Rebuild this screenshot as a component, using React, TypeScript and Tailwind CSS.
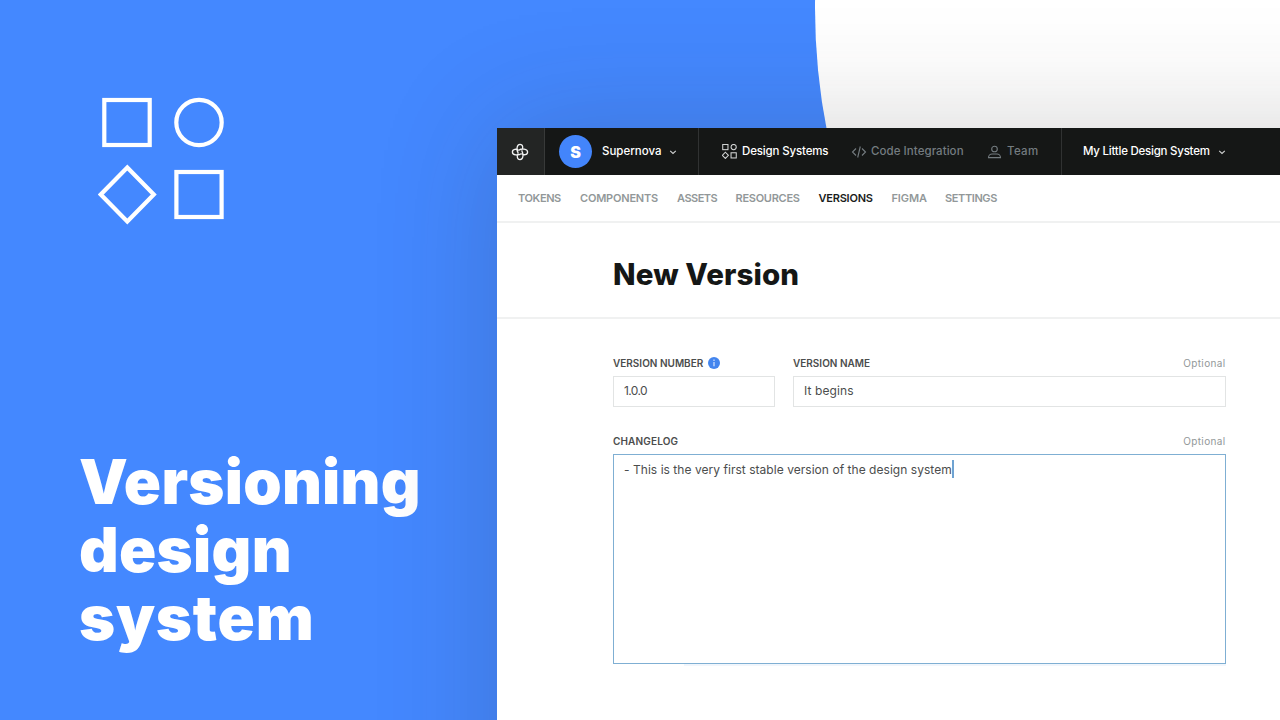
import React from "react";

const Chevron = () => (
  <svg className="mt-px h-[6px] w-[8px] shrink-0" viewBox="0 0 8 6" fill="none" stroke="#d0d2d2" strokeWidth="1.1">
    <path d="M1.2 1.8 L4 4.5 L6.8 1.8" />
  </svg>
);

const Shapes = ({ className, stroke }: { className: string; stroke: number }) => (
  <svg className={className} viewBox="0 0 130 130" fill="none" stroke="currentColor" strokeWidth={stroke}>
    <rect x="6.3" y="4" width="45.4" height="45" />
    <circle cx="101" cy="26.5" r="22.7" />
    <path d="M29.3 71.5 L55.8 98.5 L29.3 125.5 L2.8 98.5 Z" />
    <rect x="78.4" y="76" width="45.2" height="45" />
  </svg>
);

const tabs = [
  { label: "TOKENS", cls: "w-[62px] tracking-[-0.4px]" },
  { label: "COMPONENTS", cls: "w-[97px] tracking-[-0.2px]" },
  { label: "ASSETS", cls: "w-[58.5px] tracking-[-0.5px]" },
  { label: "RESOURCES", cls: "w-[83px] tracking-[-0.27px]" },
  { label: "VERSIONS", cls: "w-[73px] tracking-[-0.22px]" },
  { label: "FIGMA", cls: "w-[53.5px] tracking-[-0.1px]" },
  { label: "SETTINGS", cls: "w-[60px] tracking-[-0.4px]" },
];

export default function App() {
  return (
    <div className="relative flex h-[720px] w-[1280px] overflow-hidden bg-[#4488ff] font-['Inter',sans-serif]">
      <div className="absolute -top-[632px] left-[815px] h-[1280px] w-[1280px] rounded-full bg-white" />
      <aside className="flex w-[497px] shrink-0 flex-col pt-[96px] pl-[80px] text-white">
        <Shapes className="ml-[18px] h-[130px] w-[130px]" stroke={4.2} />
        <h1 className="mt-[221.5px] -ml-px text-[61.5px] leading-[68.3px] font-black">
          <span className="block w-fit tracking-[0.25px]">Versioning</span>
          <span className="block w-fit tracking-[0.3px]">design</span>
          <span className="block w-fit tracking-[0.8px]">system</span>
        </h1>
      </aside>

      <main className="relative mt-[128px] flex h-[900px] w-[1100px] shrink-0 flex-col bg-white shadow-[0_0_115px_rgba(45,40,40,0.2)]">
        <header className="flex h-[47px] shrink-0 items-center bg-[#151716] text-[11.5px] font-medium text-white">
          <div className="flex h-full w-[48px] items-center justify-center border-r border-[#383a39] bg-[#232524] pr-[2px]">
            <svg className="h-[18px] w-[18px]" viewBox="0 0 18 18" fill="none" stroke="#f1f2f2" strokeWidth="1.3">
              <path d="M7.2 10.2 C5.4 7.5 5.4 1.4 9 1.4 C12.2 1.4 12.4 5.6 10.6 7.6 M7.8 7.2 C10.5 5.4 16.6 5.4 16.6 9 C16.6 12.2 12.4 12.4 10.4 10.6 M10.8 7.8 C12.6 10.5 12.6 16.6 9 16.6 C5.8 16.6 5.6 12.4 7.4 10.4 M10.2 10.8 C7.5 12.6 1.4 12.6 1.4 9 C1.4 5.8 5.6 5.6 7.6 7.4" />
            </svg>
          </div>
          <div className="flex h-full w-[154px] items-center border-r border-[#303232] pl-[14px]">
            <span className="flex h-[33px] w-[33px] items-center justify-center rounded-full bg-[#4385fb] text-[16px] font-black">S</span>
            <span className="mt-px ml-[10px] w-[67px]"><span>Supernova</span></span>
            <Chevron />
          </div>
          <div className="flex h-full w-[363px] items-center border-r border-[#303232] pl-[23px]">
            <Shapes className="h-[15px] w-[15px] text-[#d3d5d5]" stroke={9} />
            <span className="mt-px ml-[5px] w-[109px] tracking-[-0.15px]"><span>Design Systems</span></span>
            <svg className="h-[14px] w-[16px]" viewBox="0 0 16 14" fill="none" stroke="#747c80" strokeWidth="1.1">
              <path d="M5 3.5 L1.5 7 L5 10.5 M11 3.5 L14.5 7 L11 10.5 M9.3 1.5 L6.7 12.5" />
            </svg>
            <span className="mt-px ml-[4px] w-[116px] tracking-[0.06px] text-[#747c80]"><span>Code Integration</span></span>
            <svg className="mt-px h-[14px] w-[15px]" viewBox="0 0 15 14" fill="none" stroke="#747c80" strokeWidth="1.1">
              <circle cx="7.5" cy="4" r="2.8" />
              <path d="M1.5 12.6 C1.5 10.2 3.5 9 5 9 H10 C11.5 9 13.5 10.2 13.5 12.6 Z" />
            </svg>
            <span className="mt-px ml-[5px] tracking-[0.3px] text-[#747c80]"><span>Team</span></span>
          </div>
          <div className="flex items-center pl-[21px]">
            <span className="mt-px w-[135px] tracking-[-0.24px] whitespace-nowrap"><span>My Little Design System</span></span>
            <Chevron />
          </div>
        </header>

        <nav className="flex h-[48px] shrink-0 items-center border-b-2 border-[#f0f1f1] pl-[21px] text-[11px] font-semibold text-[#929899]">
          {tabs.map((t) => (
            <span key={t.label} className={t.cls}>
              <span className={t.label === "VERSIONS" ? "text-[#1b1d1c]" : ""}>{t.label}</span>
            </span>
          ))}
        </nav>

        <div className="flex h-[96px] shrink-0 items-center border-b-2 border-[#f0f1f1] pt-[9px] pl-[116px]">
          <h2 className="text-[29.5px] font-extrabold tracking-[0.1px] text-[#151716]">New Version</h2>
        </div>

        <form className="ml-[116px] w-[612.5px] pt-[36px] text-[#4b4d4d]">
          <div className="flex gap-[18px]">
            <div className="w-[162px]">
              <div className="flex h-[18px] items-center pb-[2px] text-[10px] font-semibold">
                <span>VERSION NUMBER</span>
                <svg className="ml-[5px] h-[12px] w-[12px]" viewBox="0 0 12 12">
                  <circle cx="6" cy="6" r="6" fill="#4385ee" />
                  <path d="M6 4.9 V9.2 M6 2.5 V3.9" stroke="#d7e5ff" strokeWidth="1.2" />
                </svg>
              </div>
              <div className="mt-[3px] flex h-[31px] items-center border border-[#e2e4e4] pb-px pl-[10px] text-[12px] tracking-[-0.6px]"><span>1.0.0</span></div>
            </div>
            <div className="w-[432.5px]">
              <div className="flex h-[18px] items-center justify-between pb-[2px] text-[10px] font-semibold">
                <span>VERSION NAME</span>
                <span className="font-normal tracking-[0.35px] text-[#929899]">Optional</span>
              </div>
              <div className="mt-[3px] flex h-[31px] items-center border border-[#e2e4e4] pb-px pl-[10px] text-[12px] tracking-[0.1px]"><span>It begins</span></div>
            </div>
          </div>
          <div className="mt-[26px] flex h-[18px] items-center justify-between pb-px text-[10px] font-semibold">
            <span className="tracking-[0.15px]">CHANGELOG</span>
            <span className="font-normal tracking-[0.35px] text-[#929899]">Optional</span>
          </div>
          <div className="mt-[3px] flex h-[210px] items-start border border-[#7fafd3] pt-[5px] pl-[10px] text-[12px]">
            <span className="pt-px leading-[18px] tracking-[0.04px]">- This is the very first stable version of the design system</span>
            <span className="h-[18px] w-[2px] bg-[#6fa3d2]" />
          </div>
          <div className="ml-[71px] h-[2px] bg-[#f1f6fc]" />
        </form>
      </main>
    </div>
  );
}
